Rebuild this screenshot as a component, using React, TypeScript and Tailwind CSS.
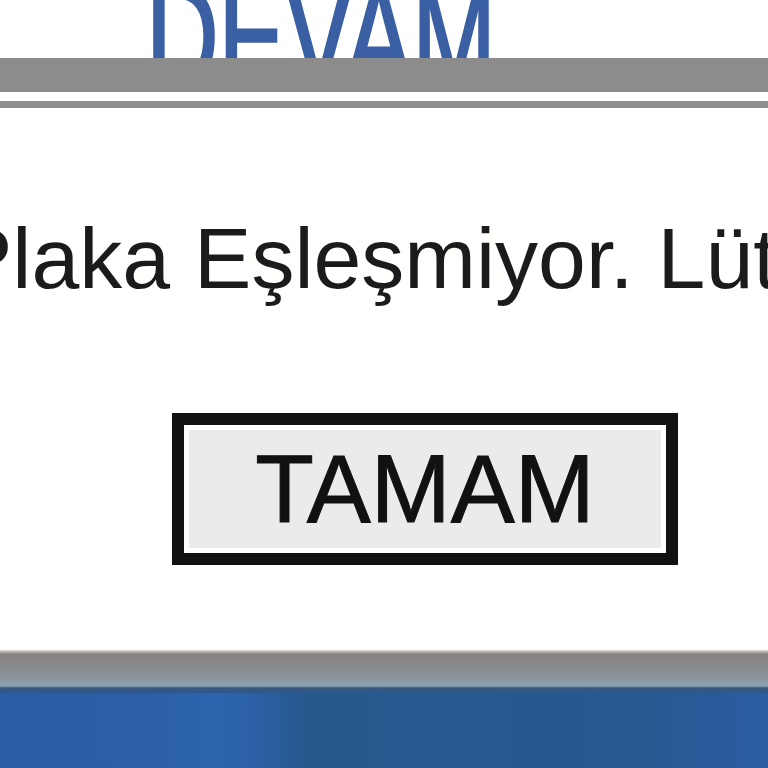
import React from 'react';

// Plate mismatch alert, shown over the "DEVAM" screen
const App: React.FC = () => {
    return (
        <div className="w-[768px] h-[768px] overflow-hidden flex flex-col bg-white font-['Liberation_Sans',Arial,sans-serif]">
            {/* Background screen: clipped "DEVAM" button label */}
            <div className="h-[58px] shrink-0 overflow-hidden bg-white">
                <div className="pl-[146px] mt-[-38px]">
                    <span className="inline-block origin-left scale-x-[0.67] text-[150px] leading-none text-[#3a5fa3] [-webkit-text-stroke:3px_#3a5fa3] whitespace-nowrap">
                        DEVAM
                    </span>
                </div>
            </div>
            <div className="h-[34px] shrink-0 bg-[#8c8c8c]" />
            <div className="h-[9px] shrink-0 bg-white" />
            <div className="h-[7px] shrink-0 bg-[#8f8f8f]" />

            {/* Dialog body */}
            <div className="h-[542px] shrink-0 bg-[#fffffd] overflow-hidden flex flex-col">
                <div className="pt-[107px] ml-[-45px] whitespace-nowrap text-[86px] leading-none text-[#1b1b1b]">
                    Plaka Eşleşmiyor. Lütfen tekrar deneyiniz.
                </div>
                <button
                    type="button"
                    className="mt-[112px] ml-[172px] w-[506px] h-[152px] border-[12px] border-[#111] bg-[#ebebeb] shadow-[inset_0_0_0_5px_#ffffff] flex items-center justify-center text-[96px] leading-none text-[#111] [-webkit-text-stroke:1px_#111]"
                >
                    TAMAM
                </button>
            </div>

            {/* Window frame bottom + taskbar */}
            <div className="h-[43px] shrink-0 bg-[linear-gradient(to_bottom,#e2ddd8_0px,#8a8585_4px,#878383_10px,#8a9098_22px,#8a979f_30px,#8da3b4_34px,#8aa0b1_36px,#3b577a_38px,#2b5890_43px)]" />
            <div className="flex-1 bg-[linear-gradient(to_right,#2a5ca3_0%,#2a5ea6_18%,#2d64ae_28%,#2b60a6_33%,#27598c_40%,#285a90_60%,#27598f_70%,#285a94_85%,#2a5ca2_100%)]" />
        </div>
    );
};

export default App;
